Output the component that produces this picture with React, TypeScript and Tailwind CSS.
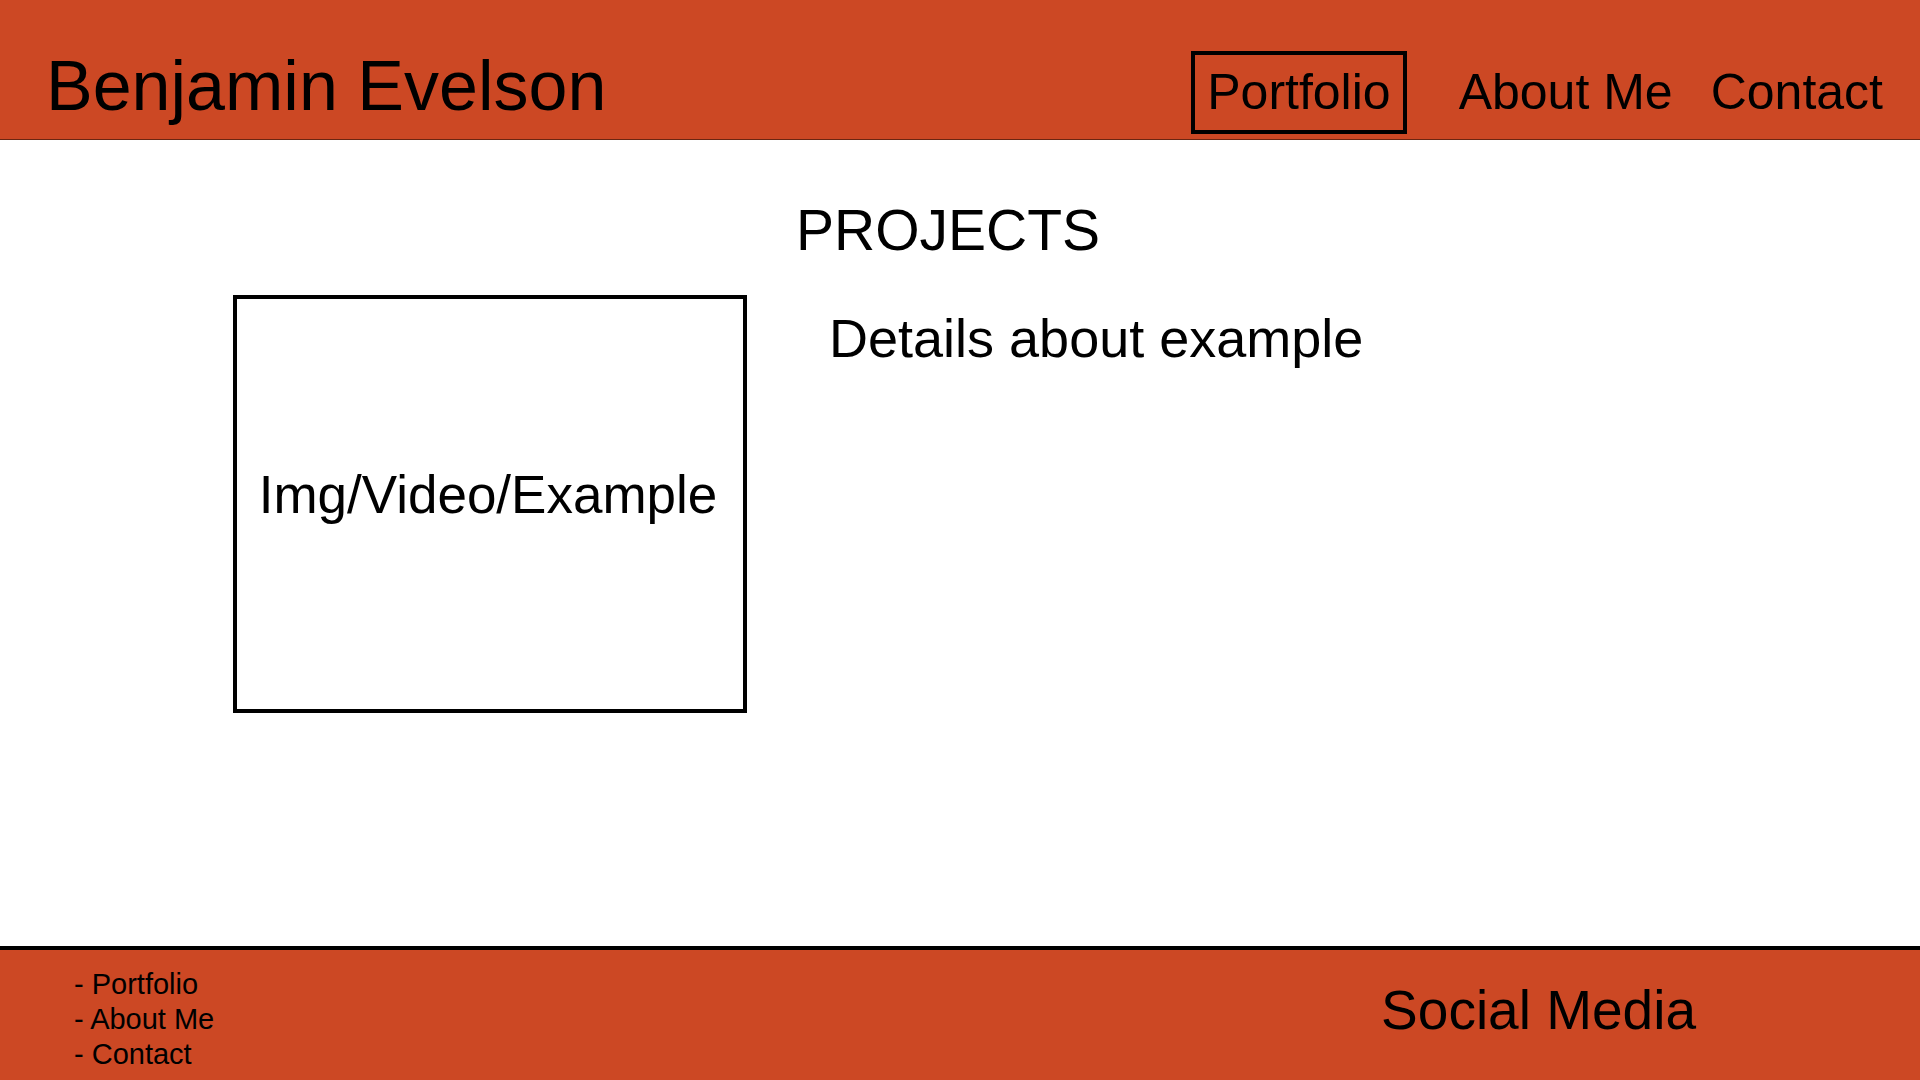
const links = [
  { label: "Portfolio", href: "#portfolio" },
  { label: "About Me", href: "#about" },
  { label: "Contact", href: "#contact" },
];

export default function App() {
  return (
    <div className="flex min-h-screen flex-col bg-white font-['Liberation_Sans',Arial,sans-serif] text-black">
      <header className="flex items-start justify-between border-b border-[#6b2612] bg-[#cc4824] pr-[37px] pl-[46px] pt-[51px] pb-[5px]">
        <h1 className="text-[70px] leading-[70px]">Benjamin Evelson</h1>
        <nav className="flex items-center text-[50px] leading-[75px]">
          <a href="#portfolio" className="mr-[52px] border-4 border-black px-3">Portfolio</a>
          <a href="#about" className="mr-[38px]">About Me</a>
          <a href="#contact">Contact</a>
        </nav>
      </header>
      <main className="flex-1 pt-[58px]">
        <h2 className="pr-6 text-center text-[57px] leading-[64px]">PROJECTS</h2>
        <section className="mt-[33px] flex items-start gap-[82px] pl-[233px]">
          <div className="flex h-[418px] w-[514px] items-center justify-center border-4 border-black pr-1 pb-[18px] text-[53px]">
            Img/Video/Example
          </div>
          <p className="pt-3 text-[54px] leading-[62px]">Details about example</p>
        </section>
      </main>
      <footer className="flex items-start justify-between border-t-4 border-black bg-[#cc4824] pr-[224px] pl-[74px]">
        <ul className="pt-[17px] pb-2 text-[29px] leading-[35px]">
          {links.map((link) => (
            <li key={link.href}>
              - <a href={link.href}>{link.label}</a>
            </li>
          ))}
        </ul>
        <p className="pt-7 text-[55px] leading-[64px]">Social Media</p>
      </footer>
    </div>
  );
}
